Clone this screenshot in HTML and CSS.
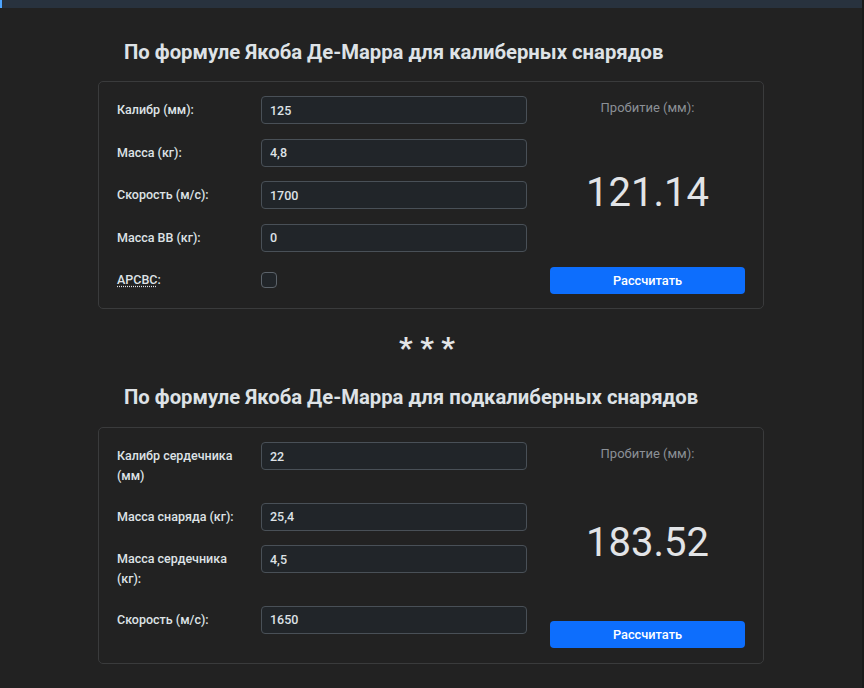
FILE: index.html
```html
<!DOCTYPE html>
<html lang="ru">
<head>
<meta charset="utf-8">
<title>Калькулятор бронепробития</title>
<link rel="stylesheet" href="styles.css">
</head>
<body>
<div class="topbar"></div>
<main class="page">
  <section class="calc">
    <h2 class="calc__title">По формуле Якоба Де-Марра для калиберных снарядов</h2>
    <div class="card">
      <form class="form">
        <div class="row">
          <label class="row__label" for="c1">Калибр (мм):</label>
          <input class="row__input" id="c1" type="text" value="125">
        </div>
        <div class="row">
          <label class="row__label" for="c2">Масса (кг):</label>
          <input class="row__input" id="c2" type="text" value="4,8">
        </div>
        <div class="row">
          <label class="row__label" for="c3">Скорость (м/с):</label>
          <input class="row__input" id="c3" type="text" value="1700">
        </div>
        <div class="row">
          <label class="row__label" for="c4">Масса ВВ (кг):</label>
          <input class="row__input" id="c4" type="text" value="0">
        </div>
        <div class="row row--last">
          <label class="row__label" for="c5"><abbr title="Armour-Piercing Capped Ballistic Capped">APCBC</abbr>:</label>
          <span class="row__check"><input class="check" id="c5" type="checkbox"></span>
        </div>
      </form>
      <div class="result">
        <div class="result__label">Пробитие (мм):</div>
        <div class="result__value">121.14</div>
        <button class="btn" type="button">Рассчитать</button>
      </div>
    </div>
  </section>

  <div class="divider">* * *</div>

  <section class="calc calc--second">
    <h2 class="calc__title">По формуле Якоба Де-Марра для подкалиберных снарядов</h2>
    <div class="card">
      <form class="form">
        <div class="row">
          <label class="row__label" for="s1">Калибр сердечника (мм)</label>
          <input class="row__input" id="s1" type="text" value="22">
        </div>
        <div class="row">
          <label class="row__label" for="s2">Масса снаряда (кг):</label>
          <input class="row__input" id="s2" type="text" value="25,4">
        </div>
        <div class="row">
          <label class="row__label" for="s3">Масса сердечника (кг):</label>
          <input class="row__input" id="s3" type="text" value="4,5">
        </div>
        <div class="row">
          <label class="row__label" for="s4">Скорость (м/с):</label>
          <input class="row__input" id="s4" type="text" value="1650">
        </div>
      </form>
      <div class="result">
        <div class="result__label">Пробитие (мм):</div>
        <div class="result__value">183.52</div>
        <button class="btn" type="button">Рассчитать</button>
      </div>
    </div>
  </section>
</main>
</body>
</html>
```

FILE: styles.css
```css
* {
  box-sizing: border-box;
}

html,
body {
  margin: 0;
  height: 100%;
}

body {
  background: #222222;
  color: #dee2e6;
  font-family: Roboto, "Liberation Sans", Arial, sans-serif;
  font-size: 13px;
  border-right: 2px solid #1a1a1a;
  overflow: hidden;
}

/* navigation strip at the top edge */
.topbar {
  height: 8px;
  background: #28323e;
  border-left: 2px solid #4ea5ff;
}

.page {
  width: 666px;
  margin: 0 auto;
}

.calc__title {
  margin: 32px 0 17px;
  padding-left: 26px;
  font-size: 20.3px;
  line-height: 24px;
  font-weight: 700;
  color: #dee2e6;
}

.calc--second .calc__title {
  margin: 19px 0 18px;
}

.card {
  display: grid;
  grid-template-columns: 410px 195px;
  column-gap: 23px;
  padding: 14px 18px;
  border: 1px solid #3a3b3c;
  border-radius: 5px;
}

.calc--second .card {
  padding-bottom: 15px;
}

.form {
  margin: 0;
}

.row {
  display: grid;
  grid-template-columns: 144px 266px;
  align-items: start;
  margin-bottom: 14.5px;
}

.row--last {
  margin-bottom: 0;
}

.row__label {
  width: 132px;
  padding: 4px 0 3px;
  font-size: 12.5px;
  line-height: 19.5px;
  font-weight: 500;
  color: #dee2e6;
}

.row__label abbr {
  text-decoration: underline dotted;
  text-underline-offset: 2px;
}

.row__input {
  width: 266px;
  height: 28px;
  padding: 0 8px;
  background: #212529;
  border: 1px solid #495057;
  border-radius: 4px;
  color: #dee2e6;
  font: 500 12.5px Roboto, "Liberation Sans", Arial, sans-serif;
  outline: none;
}

.row__check {
  display: flex;
  align-items: center;
  height: 28px;
}

.check {
  appearance: none;
  width: 16px;
  height: 16px;
  margin: 0;
  background: #212529;
  border: 1px solid #5c636a;
  border-radius: 4px;
}

.result {
  display: flex;
  flex-direction: column;
  align-items: stretch;
  text-align: center;
}

.result__label {
  padding-top: 2px;
  line-height: 20px;
  color: #8b9096;
}

.result__value {
  flex: 1;
  display: flex;
  align-items: center;
  justify-content: center;
  font-size: 40px;
  font-weight: 400;
  color: #e2e4e7;
}

.btn {
  height: 27px;
  padding: 0;
  background: #0d6efd;
  border: 0;
  border-radius: 4px;
  color: #ffffff;
  font: 500 12.8px Roboto, "Liberation Sans", Arial, sans-serif;
}

.divider {
  margin: 21px 0 0;
  padding-right: 8px;
  text-align: center;
  font-size: 30px;
  font-weight: 700;
  line-height: 36px;
  height: 36px;
  color: #e2e4e7;
}
```
